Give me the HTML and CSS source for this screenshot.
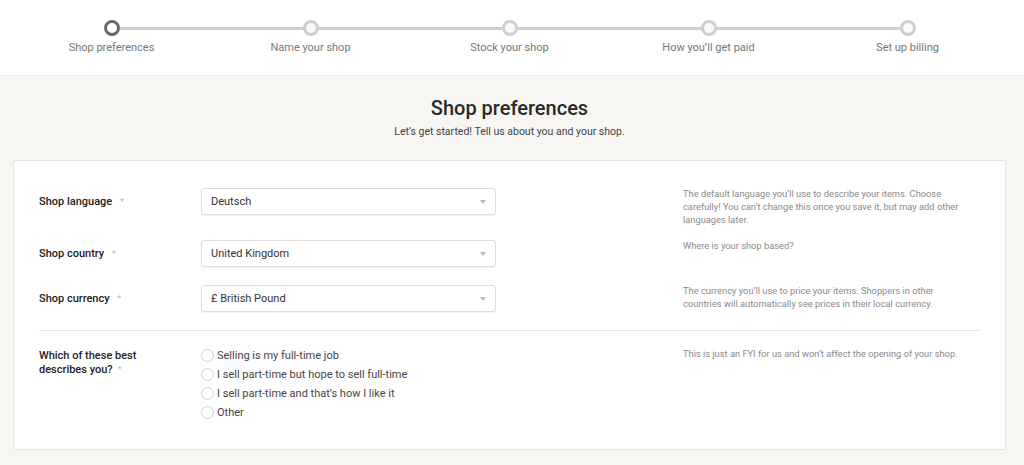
FILE: index.html
```html
<!DOCTYPE html>
<html lang="en">
<head>
<meta charset="utf-8">
<title>Shop preferences</title>
<link rel="stylesheet" href="styles.css">
</head>
<body>
<header class="top">
  <ol class="stepper">
    <li class="step step-active"><span class="dot"></span><span class="step-label">Shop preferences</span></li>
    <li class="step"><span class="dot"></span><span class="step-label">Name your shop</span></li>
    <li class="step"><span class="dot"></span><span class="step-label">Stock your shop</span></li>
    <li class="step"><span class="dot"></span><span class="step-label">How you’ll get paid</span></li>
    <li class="step"><span class="dot"></span><span class="step-label">Set up billing</span></li>
  </ol>
</header>
<main class="page">
  <div class="intro">
    <h1 class="title">Shop preferences</h1>
    <p class="subtitle">Let’s get started! Tell us about you and your shop.</p>
  </div>
  <section class="card">
    <div class="row">
      <div class="label">Shop language <span class="req">*</span></div>
      <div class="select"><span>Deutsch</span><span class="caret"></span></div>
      <p class="help">The default language you’ll use to describe your items. Choose carefully! You can’t change this once you save it, but may add other languages later.</p>
    </div>
    <div class="row row-second">
      <div class="label">Shop country <span class="req">*</span></div>
      <div class="select"><span>United Kingdom</span><span class="caret"></span></div>
      <p class="help">Where is your shop based?</p>
    </div>
    <div class="row row-third">
      <div class="label">Shop currency <span class="req">*</span></div>
      <div class="select"><span>£ British Pound</span><span class="caret"></span></div>
      <p class="help">The currency you’ll use to price your items. Shoppers in other countries will automatically see prices in their local currency.</p>
    </div>
    <hr class="divider">
    <div class="row row-radio">
      <div class="label label-multi"><span>Which of these best</span><span>describes you?<span class="req">*</span></span></div>
      <ul class="radios">
        <li class="radio"><span class="circle"></span>Selling is my full-time job</li>
        <li class="radio"><span class="circle"></span>I sell part-time but hope to sell full-time</li>
        <li class="radio"><span class="circle"></span>I sell part-time and that’s how I like it</li>
        <li class="radio"><span class="circle"></span>Other</li>
      </ul>
      <p class="help help-radio">This is just an FYI for us and won’t affect the opening of your shop.</p>
    </div>
  </section>
</main>
</body>
</html>
```

FILE: styles.css
```css
* { box-sizing: border-box; }
html, body { margin: 0; padding: 0; }
body {
  font-family: Roboto, "Noto Sans", Arial, sans-serif;
  background: #f7f6f3;
  color: #222;
  height: 465px;
  overflow: hidden;
}

.top {
  background: #fff;
  height: 76px;
  border-bottom: 1px solid #eeece8;
}
.stepper {
  list-style: none;
  margin: 0 0 0 12px;
  padding: 20px 0 0;
  width: 995px;
  display: grid;
  grid-template-columns: repeat(5, 1fr);
}
.step {
  position: relative;
  display: flex;
  flex-direction: column;
  align-items: center;
}
.step + .step::before {
  content: "";
  position: absolute;
  top: 7px;
  left: -50%;
  width: 100%;
  height: 3px;
  background: #cfcfcf;
}
.dot {
  position: relative;
  z-index: 1;
  width: 16px;
  height: 16px;
  border-radius: 50%;
  border: 3px solid #cfcfcf;
  background: #fafafa;
}
.step-active .dot { border-color: #6b6b6b; background: #fff; }
.step-label {
  margin-top: 5px;
  font-size: 11px;
  line-height: 14px;
  color: #777;
}

.page {
  margin-left: 12px;
  width: 995px;
}
.intro {
  text-align: center;
  padding-top: 20px;
}
.title {
  margin: 0;
  font-size: 20px;
  line-height: 24px;
  font-weight: 500;
  color: #2a2a2a;
}
.subtitle {
  margin: 5px 0 0;
  font-size: 10.5px;
  line-height: 14px;
  color: #444;
}

.card {
  margin: 21px 0 0 1px;
  width: 993px;
  background: #fff;
  border: 1px solid #e6e4e0;
  border-radius: 2px;
  padding: 27px 25px 27px 25px;
}
.row {
  display: grid;
  grid-template-columns: 162px 295px 1fr;
  align-items: start;
}
.row-second { margin-top: 14px; }
.row-third { margin-top: 17px; }

.label {
  font-size: 11px;
  font-weight: 500;
  line-height: 27px;
  color: #222;
}
.label-multi {
  display: flex;
  flex-direction: column;
  line-height: 14px;
  padding-top: 3px;
}
.req { color: #bbb; font-weight: 400; font-size: 9px; margin-left: 5px; }

.select {
  height: 27px;
  border: 1px solid #ddd;
  border-radius: 3px;
  box-shadow: 0 1px 1px rgba(0,0,0,0.06);
  display: flex;
  align-items: center;
  justify-content: space-between;
  padding: 0 9px;
  font-size: 11px;
  color: #333;
}
.caret {
  width: 0;
  height: 0;
  border-left: 3px solid transparent;
  border-right: 3px solid transparent;
  border-top: 4px solid #b8b8b8;
}

.help {
  margin: -1px 0 0 187px;
  max-width: 282px;
  font-size: 9.3px;
  line-height: 13px;
  color: #8a8a8a;
}
.help-radio { margin-top: 1px; max-width: none; }

.divider {
  border: 0;
  border-top: 1px solid #ebe9e6;
  margin: 17px 0 0;
}
.row-radio { margin-top: 15px; }

.radios {
  list-style: none;
  margin: 0;
  padding: 0;
}
.radio {
  display: flex;
  align-items: center;
  height: 19px;
  font-size: 11px;
  color: #444;
}
.circle {
  width: 13px;
  height: 13px;
  border-radius: 50%;
  border: 1px solid #cfcfcf;
  margin-right: 3px;
  background: #fff;
}
```
